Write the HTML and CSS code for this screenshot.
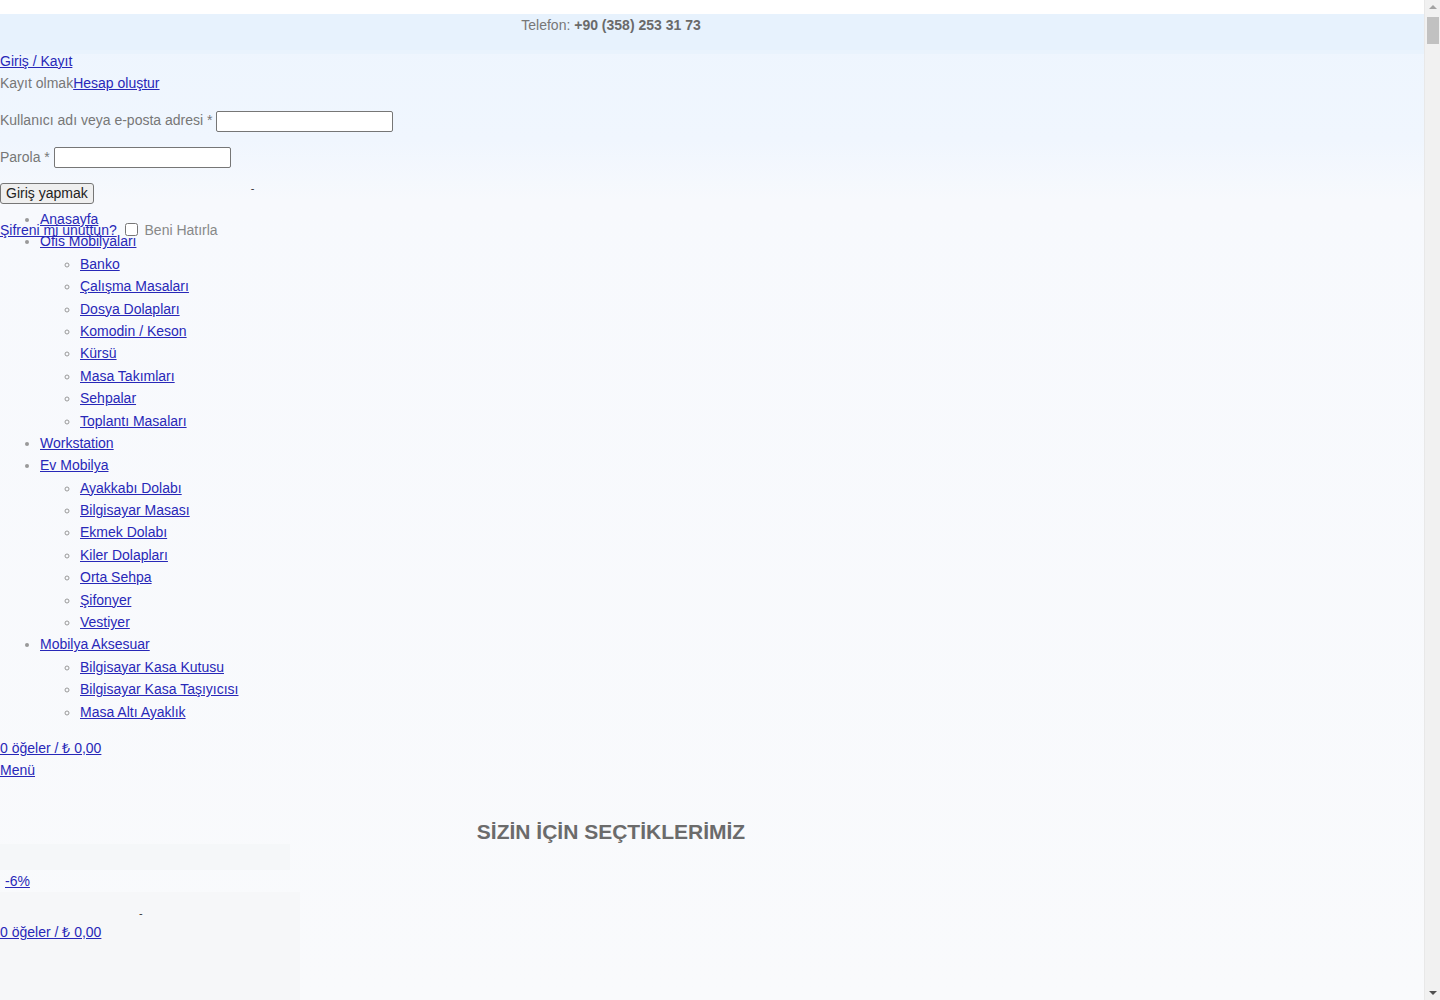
FILE: index.html
```html
<!DOCTYPE html>
<html>
	<head>
		<meta charset="utf-8">
		<title>Ofis Mobilyaları</title>
		<link rel="stylesheet" href="styles.css">
	</head>
	<body>
		<div class="top-strip"></div>
		<div class="top-bar">
			<div class="wrap">Telefon: <strong>+90 (358) 253 31 73</strong></div>
		</div>
		<div class="header">
			<div class="account">
				<a href="#">Giriş / Kayıt</a>
				<div class="register">Kayıt olmak<a href="#">Hesap oluştur</a></div>
				<form class="login">
					<p>Kullanıcı adı veya e-posta adresi * <input type="text"></p>
					<p>Parola * <input type="password"></p>
					<p><button type="button">Giriş yapmak</button><span class="dash">-</span></p>
					<p class="remember"><a href="#">Şifreni mi unuttun?</a> <label><input type="checkbox"> Beni Hatırla</label></p>
				</form>
			</div>
			<ul class="nav">
				<li><a href="#">Anasayfa</a></li>
				<li><a href="#">Ofis Mobilyaları</a>
					<ul>
						<li><a href="#">Banko</a></li>
						<li><a href="#">Çalışma Masaları</a></li>
						<li><a href="#">Dosya Dolapları</a></li>
						<li><a href="#">Komodin / Keson</a></li>
						<li><a href="#">Kürsü</a></li>
						<li><a href="#">Masa Takımları</a></li>
						<li><a href="#">Sehpalar</a></li>
						<li><a href="#">Toplantı Masaları</a></li>
					</ul>
				</li>
				<li><a href="#">Workstation</a></li>
				<li><a href="#">Ev Mobilya</a>
					<ul>
						<li><a href="#">Ayakkabı Dolabı</a></li>
						<li><a href="#">Bilgisayar Masası</a></li>
						<li><a href="#">Ekmek Dolabı</a></li>
						<li><a href="#">Kiler Dolapları</a></li>
						<li><a href="#">Orta Sehpa</a></li>
						<li><a href="#">Şifonyer</a></li>
						<li><a href="#">Vestiyer</a></li>
					</ul>
				</li>
				<li><a href="#">Mobilya Aksesuar</a>
					<ul>
						<li><a href="#">Bilgisayar Kasa Kutusu</a></li>
						<li><a href="#">Bilgisayar Kasa Taşıyıcısı</a></li>
						<li><a href="#">Masa Altı Ayaklık</a></li>
					</ul>
				</li>
			</ul>
			<div><a href="#">0 öğeler / ₺ 0,00</a></div>
			<div><a href="#">Menü</a></div>
		</div>
		<div class="section">
			<h2 class="wrap title">SİZİN İÇİN SEÇTİKLERİMİZ</h2>
			<div class="band"></div>
			<div class="badge"><a href="#">-6%</a></div>
			<div class="product">
				<div class="dash-row"><span class="dash">-</span></div>
				<a href="#">0 öğeler / ₺ 0,00</a>
			</div>
		</div>
		<div class="scrollbar">
			<span class="arrow up"></span>
			<span class="thumb"></span>
			<span class="arrow down"></span>
		</div>
	</body>
</html>
```

FILE: styles.css
```css
*{
	box-sizing: border-box;
}
html{
	background: #f9fafb;
}
body{
	margin: 0;
	font-family: "Liberation Sans", Arial, sans-serif;
	font-size: 14px;
	line-height: 1.6;
	color: #777;
	background: linear-gradient(#edf5fe 0px, #f0f6fe 140px, #f7f9fd 200px, #f9fafc 1000px);
}
a{
	color: #2828b8;
}
.wrap{
	width: 1222px;
	text-align: center;
}
.top-strip{
	height: 14px;
	background: #fff;
}
.top-bar{
	height: 36px;
	background: #e7f2fd;
	box-shadow: 0 4px 0 #e9f3fd;
}
.top-bar strong{
	color: #6a6a6a;
}
.account{
	height: 158px;
}
.login p{
	margin: 14px 0;
}
.login input[type=text],
.login input[type=password]{
	width: 177px;
	height: 21px;
	border: 1px solid #767676;
	border-radius: 2px;
	background: #fff;
	vertical-align: middle;
	margin: 0;
}
.login button{
	font-family: "Liberation Sans", Arial, sans-serif;
	font-size: 14px;
	color: #222;
	padding: 0 5px;
	height: 21px;
	border: 1px solid #767676;
	border-radius: 3px;
	background: #efefef;
}
.login .dash{
	margin-left: 157px;
	line-height: 0;
	vertical-align: 6px;
}
.login .remember{
	margin-top: 12px;
}
.login label{
	color: #888;
}
.login input[type=checkbox]{
	margin: 3px 3px 3px 4px;
	vertical-align: -1px;
}
.dash{
	color: #333;
	font-size: 11px;
}
.nav{
	margin: 0 0 14px;
	padding-left: 40px;
	color: #999;
}
.nav ul{
	margin: 0;
	padding-left: 40px;
	list-style: circle;
}
.section{
	height: 560px;
}
.title{
	margin: 38px 0 0;
	font-size: 21px;
	line-height: 24px;
	color: #6b6b6b;
}
.band{
	width: 290px;
	height: 26px;
	background: #f5f7f9;
}
.badge{
	padding-left: 5px;
	width: 300px;
}
.product{
	width: 300px;
	height: 420px;
	background: #f6f7f9;
	padding-top: 12px;
}
.dash-row{
	line-height: 16px;
}
.product .dash{
	margin-left: 139px;
}
.scrollbar{
	position: fixed;
	top: 0;
	right: 0;
	width: 16px;
	height: 100%;
	background: #f1f1f1;
	border-left: 1px solid #e8e8e8;
}
.thumb{
	position: absolute;
	top: 17px;
	left: 2px;
	width: 12px;
	height: 27px;
	background: #c1c1c1;
}
.arrow{
	position: absolute;
	left: 4px;
	width: 0;
	height: 0;
	border-left: 4px solid transparent;
	border-right: 4px solid transparent;
}
.arrow.up{
	top: 5px;
	border-bottom: 4px solid #a3a3a3;
}
.arrow.down{
	bottom: 5px;
	border-top: 4px solid #505050;
}
```
